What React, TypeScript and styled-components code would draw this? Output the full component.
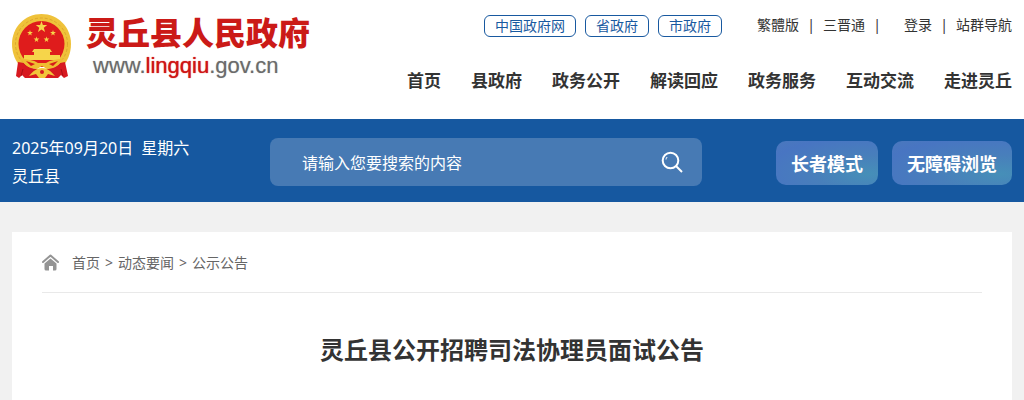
import React from 'react';
import styled, { createGlobalStyle } from 'styled-components';

const GlobalStyle = createGlobalStyle`
  * { box-sizing: border-box; }
  html { overflow-x: hidden; }
  body {
    margin: 0;
    background: #f1f1f1;
    color: #333;
    font: 14px/20px "Noto Sans", "Noto Sans CJK SC", sans-serif;
  }
  a { color: inherit; text-decoration: none; }
`;

const Container = styled.div`
  width: calc(100% - 24px);
  max-width: 1200px;
  margin: 0 auto;
`;

const Header = styled.header`
  background: #fff;
`;

const HeaderInner = styled(Container)`
  display: flex;
  justify-content: space-between;
  min-height: 119px;
`;

const Logo = styled.a`
  display: flex;
  align-items: flex-start;
  gap: 14px;
  padding-top: 13px;
`;

const LogoText = styled.span`
  display: flex;
  flex-direction: column;
  padding-top: 2px;
`;

const SiteName = styled.strong`
  color: #cb1a17;
  font: 900 32px/38px "Liberation Sans", "Noto Sans CJK SC", sans-serif;
`;

const SiteUrl = styled.span`
  padding-left: 7px;
  color: #6b6b6b;
  font: 22px/26px "Liberation Sans", sans-serif;
  text-shadow: 0 0 1px #6b6b6b80;
`;

const UrlName = styled.span`
  color: #cf1515;
  text-shadow: 0 0 1px #cf1515;
`;

const HeaderRight = styled.div`
  display: flex;
  flex-direction: column;
  align-items: flex-end;
  padding-top: 15px;
`;

const TopRow = styled.div`
  display: flex;
  align-items: flex-start;
  gap: 35px;
`;

const GovLinks = styled.div`
  display: flex;
  gap: 9px;
`;

const GovLink = styled.a`
  padding: 0 10px;
  border: 1px solid #1859a0;
  border-radius: 6px;
  color: #1859a0;
  line-height: 20px;
`;

const UserLinks = styled.div`
  display: flex;
  align-items: center;
`;

const Separator = styled.span<{ $last?: boolean }>`
  width: 24px;
  margin-right: ${p => (p.$last ? 15 : 0)}px;
  text-align: center;
`;

const MainNav = styled.nav`
  display: flex;
  gap: 30px;
  margin-top: 32px;
  font-size: 17px;
  font-weight: 700;
  line-height: 24px;
`;

const Banner = styled.section`
  background: #1658a0;
  color: #fff;
`;

const BannerInner = styled(Container)`
  display: flex;
  align-items: center;
  min-height: 83px;
`;

const DateBlock = styled.div`
  flex: 0 0 258px;
  padding-top: 3px;
  font-size: 16px;
  line-height: 28px;
`;

const DateLine = styled.div`
  display: flex;
  gap: 8px;
`;

const Search = styled.form`
  display: flex;
  flex: 1;
  max-width: 532px;
  height: 48px;
  margin-top: 3px;
  border-radius: 8px;
  background: #477ab4;
`;

const SearchInput = styled.input`
  flex: 1;
  min-width: 0;
  padding: 2px 0 0 32px;
  border: 0;
  outline: 0;
  background: transparent;
  color: #fff;
  font: 16px "Noto Sans", "Noto Sans CJK SC", sans-serif;
  &::placeholder { color: #fff; opacity: 1; }
`;

const SearchButton = styled.button`
  display: flex;
  align-items: center;
  justify-content: center;
  width: 60px;
  padding: 0;
  border: 0;
  background: transparent;
  color: #fff;
`;

const ModeButtons = styled.div`
  display: flex;
  gap: 14px;
  margin-left: auto;
  padding: 5px 0 0 74px;
`;

const ModeButton = styled.button`
  height: 44px;
  padding: 0 15px;
  border: 0;
  border-radius: 10px;
  background: radial-gradient(ellipse at 90% 75%, #468fb8 0%, #487fbb 40%, #4875c2 80%, #4a78bd 100%);
  color: #fff;
  font: 700 18px "Noto Sans", "Noto Sans CJK SC", sans-serif;
  white-space: nowrap;
`;

const Article = styled(Container)`
  margin-top: 30px;
  padding: 0 30px 40px;
  min-height: 168px;
  background: #fff;
`;

const Breadcrumb = styled.nav`
  display: flex;
  align-items: center;
  gap: 5px;
  height: 61px;
  padding-top: 2px;
  border-bottom: 1px solid #e9e9e9;
  color: #666;
`;

const HomeMark = styled.svg`
  margin: 0 8px 2px 0;
`;

const Title = styled.h1`
  margin: 39px 0 0;
  font-size: 24px;
  line-height: 36px;
  text-align: center;
`;

const star = (cx: number, cy: number, r: number) =>
  Array.from({ length: 10 }, (_, i) => {
    const radius = i % 2 ? r * 0.4 : r;
    const angle = (i * Math.PI) / 5 - Math.PI / 2;
    return `${(cx + radius * Math.cos(angle)).toFixed(1)},${(cy + radius * Math.sin(angle)).toFixed(1)}`;
  }).join(' ');

const Emblem = () => (
  <svg width="60" height="66" viewBox="0 0 60 66" aria-hidden="true">
    <path d="M29.500 1C13 1 0 14 0 31c0 10 4 18 9 23h41c5-5 9-13 9-23C59 14 46 1 29.500 1Z" fill="#efc23a" />
    <circle cx="29.500" cy="31" r="26" fill="none" stroke="#dda62c" strokeWidth="1" strokeDasharray="3 2" />
    <circle cx="29.500" cy="31" r="23" fill="#df1c1c" />
    <g fill="#f6d54a">
      <polygon points={star(29.5, 14, 6)} />
      <polygon points={star(18, 20, 3)} />
      <polygon points={star(41, 20, 3)} />
      <polygon points={star(24.5, 26.5, 3)} />
      <polygon points={star(34.5, 26.5, 3)} />
      <path d="M22 36h16l2 3h-2v3h10v5H12v-5h10v-3h-2Z" />
    </g>
    <path d="M6 49l6 1c5 8 30 8 36 0l5-1 3 14-4 2-3-3-3 3H13l-3-3-3 3-3-2Z" fill="#d71920" />
    <path d="M9 46c7 0 12 1 17 4h8c5-3 10-4 17-4-3 6-9 10-16 10l-5-3-5 3C18 56 12 52 9 46Z" fill="#efbd31" />
    <path d="M14 48l9 3-4 2Zm32 0-9 3 4 2Z" fill="#d51a1a" />
    <path d="M17 63c4-5 8-8 13-8s9 3 13 8l-7-2-3 4h-6l-3-4Z" fill="#f2c53a" />
    <circle cx="30" cy="59" r="2" fill="#d71920" />
    <path d="M11 56l-2 7m40-7 2 7" stroke="#a90f15" strokeWidth="1" />
  </svg>
);

const Home = () => (
  <HomeMark width="17" height="17" viewBox="0 0 17 17" aria-hidden="true">
    <path d="M1 8 8.500 1.500 16 8" fill="none" stroke="#949494" strokeWidth="2" strokeLinecap="round" strokeLinejoin="round" />
    <path d="M2.500 9.500 8.500 4.500 14.500 9.500V15q0 1.500-1.500 1.500H11V12H7v4.500H4Q2.500 16.500 2.500 15Z" fill="#949494" />
  </HomeMark>
);

const navItems = ['首页', '县政府', '政务公开', '解读回应', '政务服务', '互动交流', '走进灵丘'];

export default function App() {
  return (
    <>
      <GlobalStyle />
      <Header>
        <HeaderInner>
          <Logo href="#">
            <Emblem />
            <LogoText>
              <SiteName>灵丘县人民政府</SiteName>
              <SiteUrl>www.<UrlName>lingqiu</UrlName>.gov.cn</SiteUrl>
            </LogoText>
          </Logo>
          <HeaderRight>
            <TopRow>
              <GovLinks>
                <GovLink href="#">中国政府网</GovLink>
                <GovLink href="#">省政府</GovLink>
                <GovLink href="#">市政府</GovLink>
              </GovLinks>
              <UserLinks>
                <a href="#">繁體版</a>
                <Separator>|</Separator>
                <a href="#">三晋通</a>
                <Separator $last>|</Separator>
                <a href="#">登录</a>
                <Separator>|</Separator>
                <a href="#">站群导航</a>
              </UserLinks>
            </TopRow>
            <MainNav>
              {navItems.map(item => <a href="#" key={item}>{item}</a>)}
            </MainNav>
          </HeaderRight>
        </HeaderInner>
      </Header>
      <Banner>
        <BannerInner>
          <DateBlock>
            <DateLine>
              <span>2025年09月20日</span>
              <span>星期六</span>
            </DateLine>
            <div>灵丘县</div>
          </DateBlock>
          <Search onSubmit={e => e.preventDefault()}>
            <SearchInput type="text" aria-label="搜索" placeholder="请输入您要搜索的内容" />
            <SearchButton type="submit" aria-label="搜索">
              <svg width="22" height="22" viewBox="0 0 22 22" fill="none" stroke="currentColor" strokeWidth="2" aria-hidden="true">
                <circle cx="9.500" cy="9.500" r="7.800" />
                <path d="m15 15 6 6" />
                <path d="M5 8.500q0-1.500 1.200-2.500" strokeWidth="1" />
              </svg>
            </SearchButton>
          </Search>
          <ModeButtons>
            <ModeButton type="button">长者模式</ModeButton>
            <ModeButton type="button">无障碍浏览</ModeButton>
          </ModeButtons>
        </BannerInner>
      </Banner>
      <Article as="main">
        <Breadcrumb>
          <Home />
          <a href="#">首页</a>
          <span>&gt;</span>
          <a href="#">动态要闻</a>
          <span>&gt;</span>
          <a href="#">公示公告</a>
        </Breadcrumb>
        <Title>灵丘县公开招聘司法协理员面试公告</Title>
      </Article>
    </>
  );
}
